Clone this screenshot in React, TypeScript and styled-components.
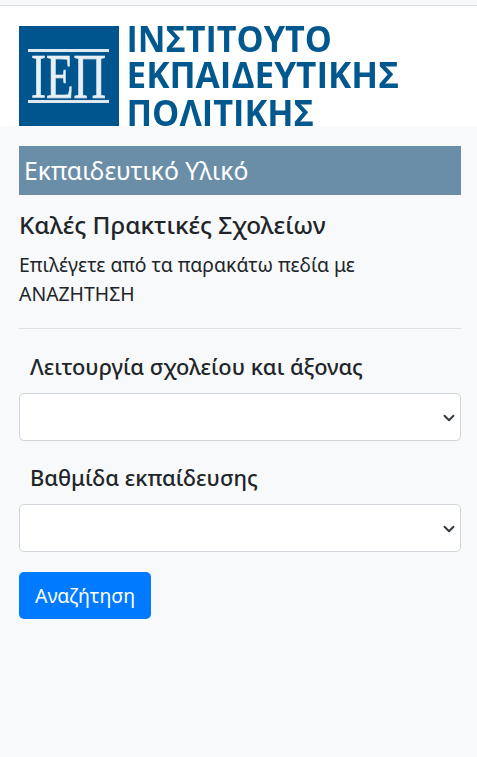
import React from "react";
import styled, { createGlobalStyle } from "styled-components";

const Global = createGlobalStyle`
  html, body { margin: 0; padding: 0; background: #f8f9fa; }
  body { font-family: "Noto Sans", "Open Sans", sans-serif; color: #212529; }
  * { box-sizing: border-box; }
`;

const Page = styled.div`
  width: 477px;
  height: 757px;
  overflow: hidden;
  background: #f8f9fa;
`;

const Header = styled.header`
  background: #fff;
  margin-top: 5px;
  border-top: 1px solid #dfdfdf;
  height: 121px;
  padding: 20px 19px 0;
  overflow: hidden;
`;

const LogoSvg = styled.svg`
  display: block;
  width: 380px;
  height: 100px;
  overflow: hidden;
  filter: blur(0.35px);
`;

const Main = styled.main`
  padding: 20px 16px 0 19px;
`;

const Banner = styled.h1`
  margin: 0;
  height: 49px;
  background: #6b8ea8;
  color: #fff;
  font-size: 24.7px;
  font-weight: 400;
  line-height: 49px;
  padding-left: 5px;
`;

const Title = styled.h2`
  margin: 15px 0 0;
  font-size: 24.3px;
  font-weight: 500;
  line-height: 30px;
`;

const Intro = styled.p`
  margin: 10px 0 0;
  font-size: 19.4px;
  line-height: 29px;
  width: 400px;
`;

const Divider = styled.hr`
  margin: 20px 0 0;
  border: 0;
  border-top: 1px solid #dfe1e4;
`;

const Field = styled.div<{ $top: number }>`
  margin-top: ${(p) => p.$top}px;
`;

const Label = styled.label`
  display: block;
  padding-left: 11px;
  font-size: 21.85px;
  font-weight: 500;
  line-height: 30px;
`;

const SelectBox = styled.div`
  position: relative;
  height: 48px;
  margin-top: 11px;
  background: #fff;
  border: 1px solid #ced4da;
  border-radius: 5px;
`;

const Chevron = styled.svg`
  position: absolute;
  right: 5px;
  top: 18px;
  width: 12px;
  height: 12px;
`;

const Button = styled.button`
  display: block;
  margin-top: 20px;
  width: 132px;
  height: 47px;
  border: 0;
  border-radius: 5px;
  background: #007bff;
  color: #fff;
  font-family: inherit;
  font-size: 19.5px;
  padding: 0;
`;

const Arrow = () => (
  <Chevron viewBox="0 0 16 16" aria-hidden="true">
    <path d="M2 5l6 6 6-6" fill="none" stroke="#343a40" strokeWidth="2.6" strokeLinecap="round" strokeLinejoin="round" />
  </Chevron>
);

const logoLine = {
  fontFamily: "'Open Sans', 'Noto Sans', sans-serif",
  fontWeight: 700,
  fontSize: 36.5,
  fill: "#00588f",
} as const;

const App = () => (
  <Page>
    <Global />
    <Header>
      <LogoSvg viewBox="0 0 380 100" role="img" aria-label="Ινστιτούτο Εκπαιδευτικής Πολιτικής">
        <rect width="100" height="100" fill="#00558e" />
        <rect x="9" y="23" width="81" height="3" fill="#dfe9f1" />
        <rect x="9" y="74" width="81" height="3" fill="#dfe9f1" />
        <text x="49.5" y="72" textAnchor="middle" fontFamily="'Liberation Serif', serif" fontSize="63" fill="#e8eff5" stroke="#e8eff5" strokeWidth="0.7" textLength="75" lengthAdjust="spacingAndGlyphs">ΙΕΠ</text>
        <text x="107.5" y="26" textLength="205.5" lengthAdjust="spacingAndGlyphs" {...logoLine}>ΙΝΣΤΙΤΟΥΤΟ</text>
        <text x="107.5" y="62" textLength="272.5" lengthAdjust="spacingAndGlyphs" {...logoLine}>ΕΚΠΑΙΔΕΥΤΙΚΗΣ</text>
        <text x="107.5" y="100" textLength="187.5" lengthAdjust="spacingAndGlyphs" {...logoLine}>ΠΟΛΙΤΙΚΗΣ</text>
      </LogoSvg>
    </Header>
    <Main>
      <Banner>Εκπαιδευτικό Υλικό</Banner>
      <Title>Καλές Πρακτικές Σχολείων</Title>
      <Intro>Επιλέγετε από τα παρακάτω πεδία με ΑΝΑΖΗΤΗΣΗ</Intro>
      <Divider />
      <Field $top={23}>
        <Label>Λειτουργία σχολείου και άξονας</Label>
        <SelectBox><Arrow /></SelectBox>
      </Field>
      <Field $top={22}>
        <Label>Βαθμίδα εκπαίδευσης</Label>
        <SelectBox><Arrow /></SelectBox>
      </Field>
      <Button>Αναζήτηση</Button>
    </Main>
  </Page>
);

export default App;
